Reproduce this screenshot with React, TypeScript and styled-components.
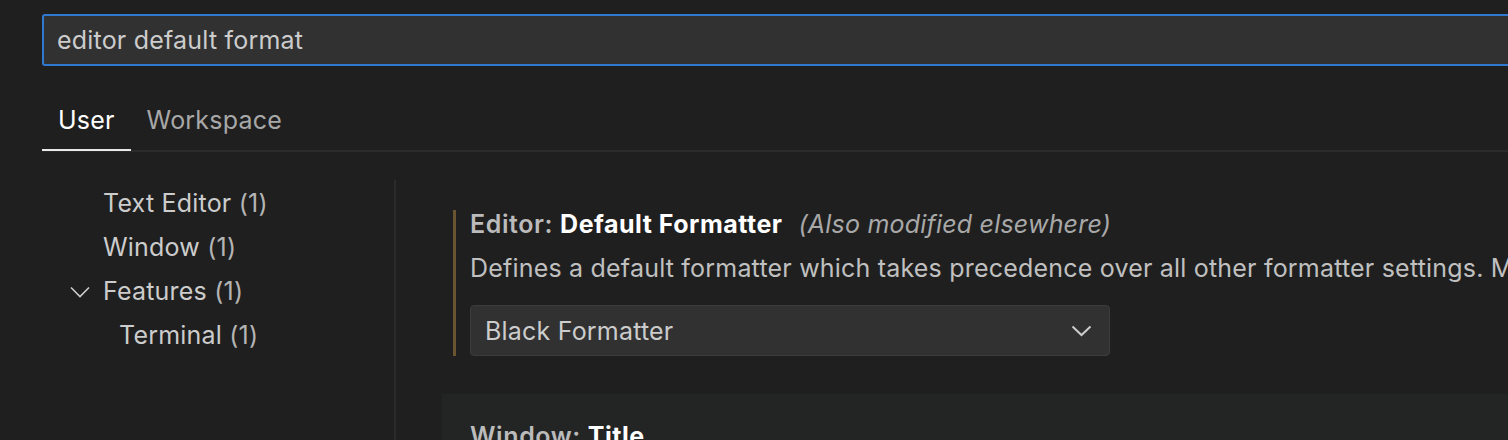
import React from 'react';
import styled, { createGlobalStyle } from 'styled-components';

const GlobalStyle = createGlobalStyle`
  html, body {
    margin: 0;
    padding: 0;
    background: #1f1f1f;
    overflow: hidden;
  }
  body {
    font-family: Inter, "Noto Sans", sans-serif;
    font-size: 25px;
    letter-spacing: 0.2px;
    color: #cccccc;
  }
`;

const Page = styled.div`
  width: 1508px;
  height: 440px;
  overflow: hidden;
  padding: 14px 0 0 42px;
  box-sizing: border-box;
`;

const SearchBox = styled.div`
  width: 1560px;
  height: 52px;
  box-sizing: border-box;
  border: 2px solid #2f7ad0;
  border-radius: 3px;
  background: #313131;
  display: flex;
  align-items: center;
  padding-left: 13px;
  color: #cccccc;
`;

const TabBar = styled.div`
  display: flex;
  height: 84px;
  align-items: flex-end;
  border-bottom: 2px solid #2b2b2b;
  margin-right: -42px;
`;

const Tab = styled.div<{ $active?: boolean }>`
  padding: 0 16px 4px;
  height: 58px;
  box-sizing: border-box;
  display: flex;
  align-items: center;
  color: ${(p) => (p.$active ? '#ffffff' : '#a8a8a8')};
  box-shadow: ${(p) => (p.$active ? 'inset 0 -2px 0 #e8e8e8' : 'none')};
  margin-bottom: -1px;
`;

const Body = styled.div`
  display: flex;
  margin-top: 28px;
  height: 300px;
`;

const Nav = styled.div`
  flex: 0 0 354px;
  box-sizing: border-box;
  border-right: 2px solid #2b2b2b;
  padding-top: 1px;
`;

const TreeRow = styled.div<{ $indent: number }>`
  height: 44px;
  display: flex;
  align-items: center;
  padding-left: ${(p) => 61 + p.$indent * 16}px;
  position: relative;
  color: #cccccc;
  white-space: pre;
`;

const Twistie = styled.svg`
  position: absolute;
  left: 28px;
  top: 13px;
`;

const Count = styled.span`
  color: #b4b4b4;
`;

const Content = styled.div`
  flex: 1;
  min-width: 0;
  padding-left: 46px;
`;

const Item = styled.div<{ $hover?: boolean }>`
  padding: ${(p) => (p.$hover ? '28px' : '30px')} 0 38px 11px;
  background: ${(p) => (p.$hover ? '#232424' : 'transparent')};
`;

const ItemInner = styled.div<{ $modified?: boolean }>`
  border-left: 3px solid ${(p) => (p.$modified ? '#6b5530' : 'transparent')};
  padding-left: 14px;
`;

const Title = styled.div`
  line-height: 28px;
  white-space: nowrap;
`;

const Category = styled.span`
  color: #bbbbbb;
  font-weight: 600;
  letter-spacing: 0.6px;
`;

const Label = styled.span`
  color: #ffffff;
  font-weight: 700;
  letter-spacing: 0.5px;
`;

const Note = styled.span`
  color: #a8a8a8;
  font-style: italic;
  margin-left: 16px;
`;

const Description = styled.div`
  line-height: 28px;
  margin-top: 16px;
  color: #c0c0c0;
  white-space: nowrap;
`;

const Select = styled.div`
  margin-top: 23px;
  width: 640px;
  height: 51px;
  box-sizing: border-box;
  background: #313131;
  border: 1px solid #3c3c3c;
  border-radius: 4px;
  display: flex;
  align-items: center;
  justify-content: space-between;
  padding: 0 17px 0 14px;
  color: #cccccc;
`;

const Chevron = () => (
  <svg width="21" height="12" viewBox="0 0 21 12" fill="none">
    <polyline points="1.5,1.5 10.5,10 19.5,1.5" stroke="#cccccc" strokeWidth="2" />
  </svg>
);

const tree = [
  { label: 'Text Editor', count: 1, indent: 0 },
  { label: 'Window', count: 1, indent: 0 },
  { label: 'Features', count: 1, indent: 0, open: true },
  { label: 'Terminal', count: 1, indent: 1 },
];

export default function App() {
  return (
    <>
      <GlobalStyle />
      <Page>
        <SearchBox>editor default format</SearchBox>
        <TabBar>
          <Tab $active>User</Tab>
          <Tab>Workspace</Tab>
        </TabBar>
        <Body>
          <Nav>
            {tree.map((t) => (
              <TreeRow key={t.label} $indent={t.indent}>
                {t.open && (
                  <Twistie width="20" height="20" viewBox="0 0 20 20" fill="none">
                    <polyline points="1,5.5 10,14.5 19,5.5" stroke="#cccccc" strokeWidth="1.6" />
                  </Twistie>
                )}
                {t.label} <Count>({t.count})</Count>
              </TreeRow>
            ))}
          </Nav>
          <Content>
            <Item>
              <ItemInner $modified>
                <Title>
                  <Category>Editor: </Category>
                  <Label>Default Formatter</Label>
                  <Note>(Also modified elsewhere)</Note>
                </Title>
                <Description>
                  Defines a default formatter which takes precedence over all other formatter settings. Must be the identifier of an extension contributing a formatter.
                </Description>
                <Select>
                  Black Formatter
                  <Chevron />
                </Select>
              </ItemInner>
            </Item>
            <Item $hover>
              <ItemInner>
                <Title>
                  <Category>Window: </Category>
                  <Label>Title</Label>
                </Title>
              </ItemInner>
            </Item>
          </Content>
        </Body>
      </Page>
    </>
  );
}
